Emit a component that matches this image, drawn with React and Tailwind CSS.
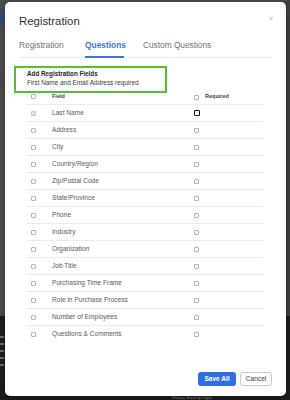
import React from "react";

const rows = [
  "Last Name",
  "Address",
  "City",
  "Country/Region",
  "Zip/Postal Code",
  "State/Province",
  "Phone",
  "Industry",
  "Organization",
  "Job Title",
  "Purchasing Time Frame",
  "Role in Purchase Process",
  "Number of Employees",
  "Questions & Comments",
];

function Box({ variant }) {
  if (variant === "disabled") {
    return (
      <span className="flex h-[5px] w-[5px] items-center justify-center rounded-[1px] border border-[#c9c9c9] bg-[#dedede]">
        <svg width="4" height="4" viewBox="0 0 4 4">
          <path d="M0.6 2.1 L1.6 3 L3.4 0.9" fill="none" stroke="#f4f4f4" strokeWidth="0.7" />
        </svg>
      </span>
    );
  }
  if (variant === "focus") {
    return <span className="block h-[6px] w-[6px] rounded-[1px] border-[1.5px] border-[#111]" />;
  }
  return <span className="block h-[5px] w-[5px] rounded-[1px] border border-[#b4b4b4] bg-white" />;
}

export default function App() {
  return (
    <div
      className="relative h-[400px] w-[290px] overflow-hidden"
      style={{ fontFamily: '"Liberation Sans", Arial, sans-serif' }}
    >
      {/* page behind the dialog */}
      <div className="flex h-[400px] flex-col">
        <div className="relative h-[316px] bg-[#4a4a4a]">
          <div className="mt-[13px] h-[12px] w-[4px] bg-[#2f4b78]" />
          <div className="absolute right-0 top-0 h-[316px] w-[4px] bg-[#3e3e3e]" />
        </div>
        <div className="flex flex-1 flex-col justify-between bg-[#1c1c1c]">
          <div className="mt-[20px] flex flex-col gap-[5px] pl-0">
            <div className="h-[2px] w-[4px] bg-[#6a6a6a]" />
            <div className="h-[2px] w-[4px] bg-[#6a6a6a]" />
            <div className="h-[2px] w-[4px] bg-[#6a6a6a]" />
            <div className="h-[2px] w-[4px] bg-[#6a6a6a]" />
            <div className="h-[2px] w-[4px] bg-[#6a6a6a]" />
          </div>
          <div className="pl-[172px] text-[4px] leading-[4px] text-[#8a8a8a]">
            Privacy Security Legal
          </div>
        </div>
      </div>

      {/* dialog */}
      <div className="absolute left-[5px] top-[2px] flex h-[394px] w-[281px] flex-col rounded-[5px] bg-white px-[14px] pt-[12px] pb-[10px] shadow-[0_1px_6px_rgba(0,0,0,0.25)]">
        <div className="flex h-[14px] items-center justify-between">
          <span className="text-[11.4px] leading-[14px] text-[#2f2f33]">Registration</span>
          <span className="mr-[-2px] mt-[-4px] text-[7px] leading-[8px] text-[#c4c4c4]">✕</span>
        </div>

        <div className="mt-[11px] flex gap-[19px] border-b border-[#ececec]">
          <div className="w-[47px] pb-[6px] text-[8.4px] leading-[12px] text-[#70717e]">Registration</div>
          <div className="-mb-px w-[39px] border-b-2 border-[#3b74e0] pb-[5px] text-[8.4px] font-semibold leading-[12px] text-[#3b74e0]">
            Questions
          </div>
          <div className="w-[72px] pb-[6px] text-[8.3px] leading-[12px] text-[#70717e]">Custom Questions</div>
        </div>

        <div className="-ml-[5px] mt-[8px] h-[27px] w-[153px] border-2 border-[#55c22c] pl-[11px] pt-[2px]">
          <div className="text-[6.3px] font-bold leading-[8.5px] text-[#232323]">Add Registration Fields</div>
          <div className="text-[6.4px] leading-[8.5px] text-[#3c3c3c]">First Name and Email Address required.</div>
        </div>

        <div className="ml-[8px] w-[236px]">
          <div className="grid h-[11.3px] grid-cols-[25px_142px_1fr]">
            <div className="pl-[4px] pt-[0.5px]">
              <Box />
            </div>
            <div className="text-[5.5px] font-bold leading-[6px] text-[#444]">Field</div>
            <div className="flex items-start gap-[6px]">
              <span className="mt-[2px]">
                <Box />
              </span>
              <span className="text-[5.5px] font-bold leading-[6px] text-[#444]">Required</span>
            </div>
          </div>
          {rows.map((r, i) => (
            <div
              key={r}
              className="grid h-[17px] grid-cols-[25px_142px_1fr] items-center border-t border-[#ebebeb]"
            >
              <div className="pl-[4px]">
                <Box variant={i === 0 ? "disabled" : undefined} />
              </div>
              <div className="text-[6.6px] leading-[8px] text-[#5a5a5a]">{r}</div>
              <div className={i === 0 ? "-ml-[0.5px]" : ""}>
                <Box variant={i === 0 ? "focus" : undefined} />
              </div>
            </div>
          ))}
        </div>

        <div className="mt-auto flex justify-end gap-[4px]">
          <div className="flex h-[14px] w-[38px] items-center justify-center rounded-[3px] bg-[#2f6fe4] text-[6.5px] font-semibold text-white">
            Save All
          </div>
          <div className="flex h-[14px] w-[32px] items-center justify-center rounded-[3px] border border-[#c9c9cf] bg-white text-[6.6px] text-[#444]">
            Cancel
          </div>
        </div>
      </div>
    </div>
  );
}
